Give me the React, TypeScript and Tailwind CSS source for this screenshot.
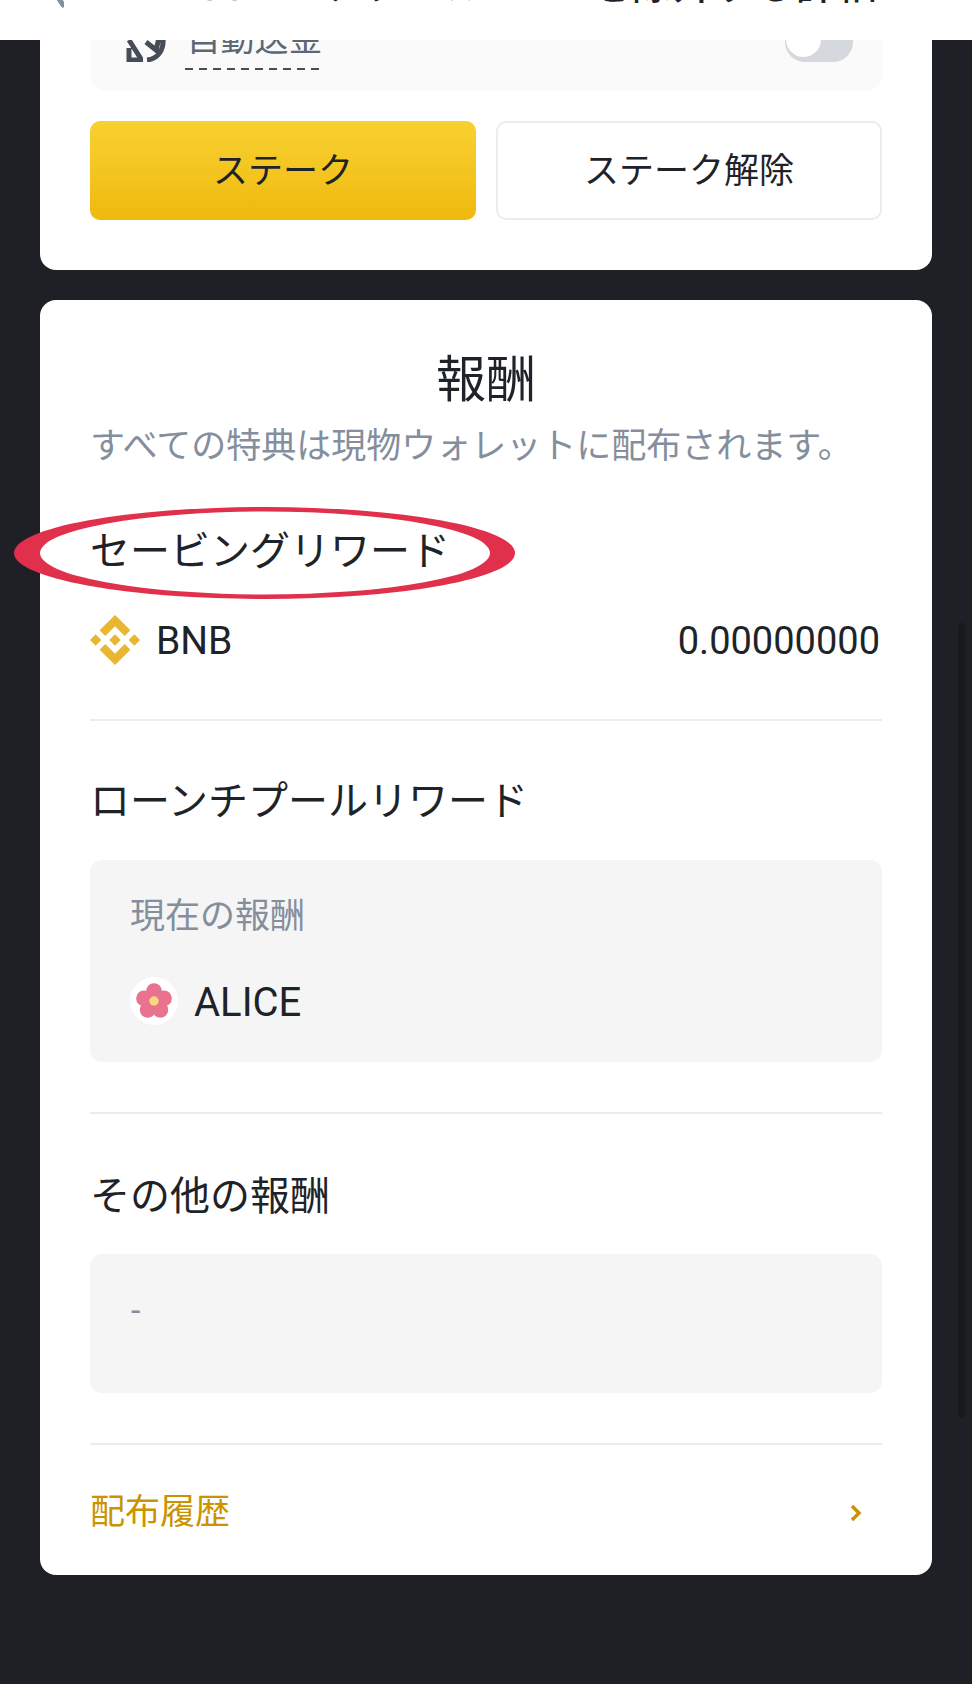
import React from "react";

const jp = "font-['Roboto','Noto_Sans_CJK_JP',sans-serif]";

const Divider = () => <div className="h-[2px] bg-[#eaecef]" />;

const SectionTitle = ({ children }: { children: React.ReactNode }) => (
  <h3 className="h-[48px] text-[40px] leading-[52px] font-normal text-[#1e2329] whitespace-nowrap">{children}</h3>
);

const BnbIcon = () => (
  <svg viewBox="0 0 126.61 126.61" className="w-[50px] h-[50px] shrink-0" fill="#e8b630">
    <path d="M38.73 53.2l24.59-24.58 24.6 24.6 14.3-14.31L63.32 0 24.42 38.9zM0 63.31l14.3-14.31 14.31 14.31-14.31 14.3zM38.73 73.41l24.59 24.59 24.6-24.6 14.31 14.29-38.9 38.91-38.91-38.88v-.03zM98 63.31L112.3 49l14.31 14.3-14.31 14.32zM77.83 63.3L63.32 48.78 52.59 59.51l-1.24 1.23-2.54 2.54 14.51 14.5 14.51-14.47z" />
  </svg>
);

const AliceIcon = () => (
  <div className="w-[48px] h-[48px] rounded-full bg-white flex items-center justify-center shrink-0">
    <svg viewBox="0 0 40 40" className="w-[42px] h-[42px]">
      <g fill="#e9728f">
        <circle cx="20" cy="10.5" r="7.5" />
        <circle cx="29.5" cy="17.5" r="7.5" />
        <circle cx="26" cy="28.5" r="7.5" />
        <circle cx="14" cy="28.5" r="7.5" />
        <circle cx="10.5" cy="17.5" r="7.5" />
        <circle cx="20" cy="20" r="8" />
      </g>
      <circle cx="20" cy="20" r="4.5" fill="#f9d77e" />
    </svg>
  </div>
);

export default function App() {
  return (
    <div className={`relative min-h-[1684px] bg-[#1e2026] overflow-hidden ${jp}`}>
      {/* top bar, title is cut off by the top of the page */}
      <header className="relative z-10 h-[40px] bg-white overflow-hidden">
        <div className="flex items-start pl-[40px] -mt-[36px] h-[80px]">
          <svg viewBox="0 0 24 48" className="w-[24px] h-[48px] -mt-[3px] text-[#848e9c]" fill="none" stroke="currentColor" strokeWidth="5" strokeLinecap="round">
            <path d="M30 14 L14 30 L23 44" />
          </svg>
          <div className="ml-[138px] text-[40px] leading-[44px] tracking-[1px] font-medium text-[#1e2329] whitespace-nowrap">
            ローンチプール BNB を除外する詳細
          </div>
        </div>
      </header>

      <main className="px-[40px]">
        {/* stake card, scrolled under the top bar */}
        <section className="bg-white rounded-b-[16px] px-[50px] pb-[50px]">
          <div className="h-[51px] bg-[#fafafa] rounded-b-[16px] overflow-hidden flex items-start justify-between pl-[36px] pr-[29px]">
            <div className="flex items-start -mt-[20px]">
              <svg viewBox="0 0 40 42" className="w-[40px] h-[42px]" fill="none" stroke="#474d57" strokeWidth="5">
                <path d="M3 20 L15 39 M3 28 V40 H17" />
                <path d="M20 22 L30 30 L33 18 M37 18 C38 30 32 39 21 40" />
              </svg>
              <div className="ml-[19px] w-[139px]">
                <div className="h-[47px] text-[34px] leading-[38px] text-[#5e6673] text-center whitespace-nowrap">自動送金</div>
                <div className="h-[2px] mt-[1px] bg-[repeating-linear-gradient(90deg,#474d57_0,#474d57_8px,transparent_8px,transparent_14px)]" />
              </div>
            </div>
            <div className="w-[68px] h-[42px] -mt-[20px] rounded-[20px] bg-[#d5d8dd] p-[1px]">
              <div className="w-[35px] h-[36px] rounded-full bg-white" />
            </div>
          </div>

          <div className="grid grid-cols-2 gap-[20px] mt-[30px]">
            <button className="h-[99px] pt-[3px] rounded-[10px] bg-gradient-to-b from-[#f8d12f] to-[#f0b90b] text-[35px] text-[#1e2329]">
              ステーク
            </button>
            <button className="h-[99px] pt-[3px] rounded-[10px] border-[2px] border-[#eaecef] bg-white text-[35px] text-[#1e2329]">
              ステーク解除
            </button>
          </div>
        </section>

        {/* rewards card */}
        <section className="mt-[30px] h-[1275px] bg-white rounded-[16px] px-[50px] pt-[52px]">
          <h2 className="text-center text-[50px] leading-[56px] font-normal text-[#1e2329]">報酬</h2>
          <p className="mt-[17px] text-[35px] leading-[44px] text-[#848e9c] whitespace-nowrap">
            すべての特典は現物ウォレットに配布されます。
          </p>

          <div className="mt-[57px]">
            <SectionTitle>セービングリワード</SectionTitle>
          </div>
          <div className="mt-[42px] mb-[55px] h-[48px] flex items-center justify-between pr-[2px]">
            <div className="flex items-center gap-[16px]">
              <BnbIcon />
              <span className="pt-[2px] text-[39px] text-[#1e2329]">BNB</span>
            </div>
            <span className="pt-[2px] text-[38px] text-[#1e2329]">0.00000000</span>
          </div>
          <Divider />

          <div className="mt-[55px]">
            <SectionTitle>ローンチプールリワード</SectionTitle>
          </div>
          <div className="mt-[36px] h-[202px] rounded-[12px] bg-[#f5f5f5] pl-[40px] pt-[35px]">
            <div className="text-[35px] leading-[44px] text-[#848e9c]">現在の報酬</div>
            <div className="mt-[36px] flex items-center gap-[16px]">
              <AliceIcon />
              <span className="pt-[4px] text-[40px] leading-[48px] text-[#1e2329]">ALICE</span>
            </div>
          </div>
          <div className="mt-[50px]">
            <Divider />
          </div>

          <div className="mt-[57px]">
            <SectionTitle>その他の報酬</SectionTitle>
          </div>
          <div className="mt-[35px] h-[139px] rounded-[12px] bg-[#f5f5f5] pl-[41px] pt-[34px]">
            <div className="text-[34px] leading-[44px] text-[#848e9c]">-</div>
          </div>
          <div className="mt-[50px]">
            <Divider />
          </div>

          <div className="mt-[46px] flex items-center justify-between pr-[20px]">
            <span className="text-[35px] leading-[44px] text-[#c99400]">配布履歴</span>
            <svg viewBox="0 0 12 18" className="w-[12px] h-[18px]" fill="none" stroke="#c99400" strokeWidth="3.5">
              <path d="M2 2 L9 9 L2 16" />
            </svg>
          </div>
        </section>
      </main>

      {/* overlays: scrollbar and the red marker circle */}
      <div className="absolute left-[958px] top-[623px] w-[7px] h-[795px] rounded-full bg-[#18191d]" />
      <svg className="absolute left-0 top-[500px] w-[530px] h-[110px]" viewBox="0 0 530 110">
        <path
          fillRule="evenodd"
          fill="#e0304c"
          d="M14 53 A250.5 46 0 1 0 515 53 A250.5 46 0 1 0 14 53 Z M40 53 A225 41.5 0 1 0 490 53 A225 41.5 0 1 0 40 53 Z"
        />
      </svg>
    </div>
  );
}
